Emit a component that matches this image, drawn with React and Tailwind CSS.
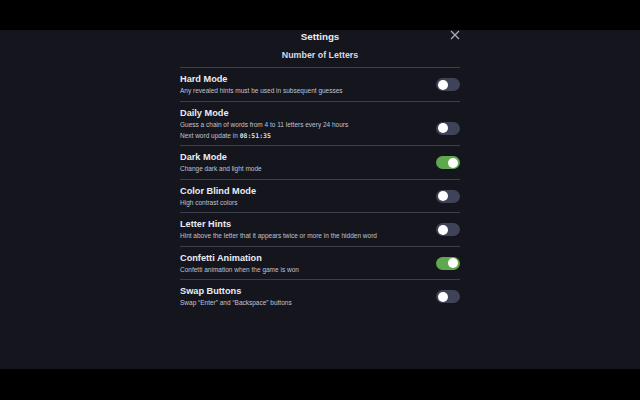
import React from "react";

const rows = [
  { title: "Hard Mode", desc: ["Any revealed hints must be used in subsequent guesses"], on: false },
  { title: "Daily Mode", desc: ["Guess a chain of words from 4 to 11 letters every 24 hours"], extra: true, on: false },
  { title: "Dark Mode", desc: ["Change dark and light mode"], on: true },
  { title: "Color Blind Mode", desc: ["High contrast colors"], on: false },
  { title: "Letter Hints", desc: ["Hint above the letter that it appears twice or more in the hidden word"], on: false },
  { title: "Confetti Animation", desc: ["Confetti animation when the game is won"], on: true },
  { title: "Swap Buttons", desc: ["Swap \u201cEnter\u201d and \u201cBackspace\u201d buttons"], on: false },
];

function Toggle({ on, low }) {
  return (
    <div className={`w-[24px] h-[13px] rounded-full flex items-center px-[2px] ${low ? "mt-[9px]" : ""} ${on ? "bg-[#5fa84f] justify-end" : "bg-[#3f4357] justify-start"}`}>
      <div className="w-[10px] h-[10px] rounded-full bg-white" />
    </div>
  );
}

export default function App() {
  return (
    <div className="w-[640px] h-[400px] bg-black flex flex-col" style={{ fontFamily: "'Liberation Sans', Arial, sans-serif" }}>
      <div className="h-[30px]" />
      <div className="flex-1 bg-[#15151e] flex justify-center">
        <div className="w-[280px] flex flex-col">
          <div className="grid grid-cols-[1fr_auto_1fr] items-start h-[13px]">
            <div />
            <div className="text-[9.8px] font-bold text-[#eceef2] leading-[13px]">Settings</div>
            <div className="flex justify-end">
              <svg width="10" height="10" viewBox="0 0 10 10">
                <path d="M1 1L9 9M9 1L1 9" stroke="#a9adbd" strokeWidth="1.2" />
              </svg>
            </div>
          </div>
          <div className="text-center text-[8.9px] font-bold text-[#d8dae2] mt-[6px] leading-[12px]">Number of Letters</div>
          <div className="h-[1px] bg-[#3b3e4b] mt-[6px]" />
          {rows.map((r, i) => (
            <div key={r.title}>
              {i > 0 && <div className="h-[1px] bg-[#3b3e4b]" />}
              <div className="flex items-center justify-between pt-[5px] pb-[4.5px]">
                <div className="flex flex-col">
                  <div className="text-[9.2px] font-bold text-[#eaecf0] leading-[12px]">{r.title}</div>
                  {r.desc.map((d) => (
                    <div key={d} className="text-[6.5px] text-[#c0c3cf] leading-[10px] mt-[1px]">{d}</div>
                  ))}
                  {r.extra && (
                    <div className="text-[6.5px] text-[#c0c3cf] leading-[10px] mt-[1px]">
                      Next word update in <span className="font-bold text-[#dcdee5]" style={{ fontFamily: "'DejaVu Sans Mono', monospace" }}>08:51:35</span>
                    </div>
                  )}
                </div>
                <Toggle on={r.on} low={r.extra} />
              </div>
            </div>
          ))}
        </div>
      </div>
      <div className="h-[31px]" />
    </div>
  );
}
